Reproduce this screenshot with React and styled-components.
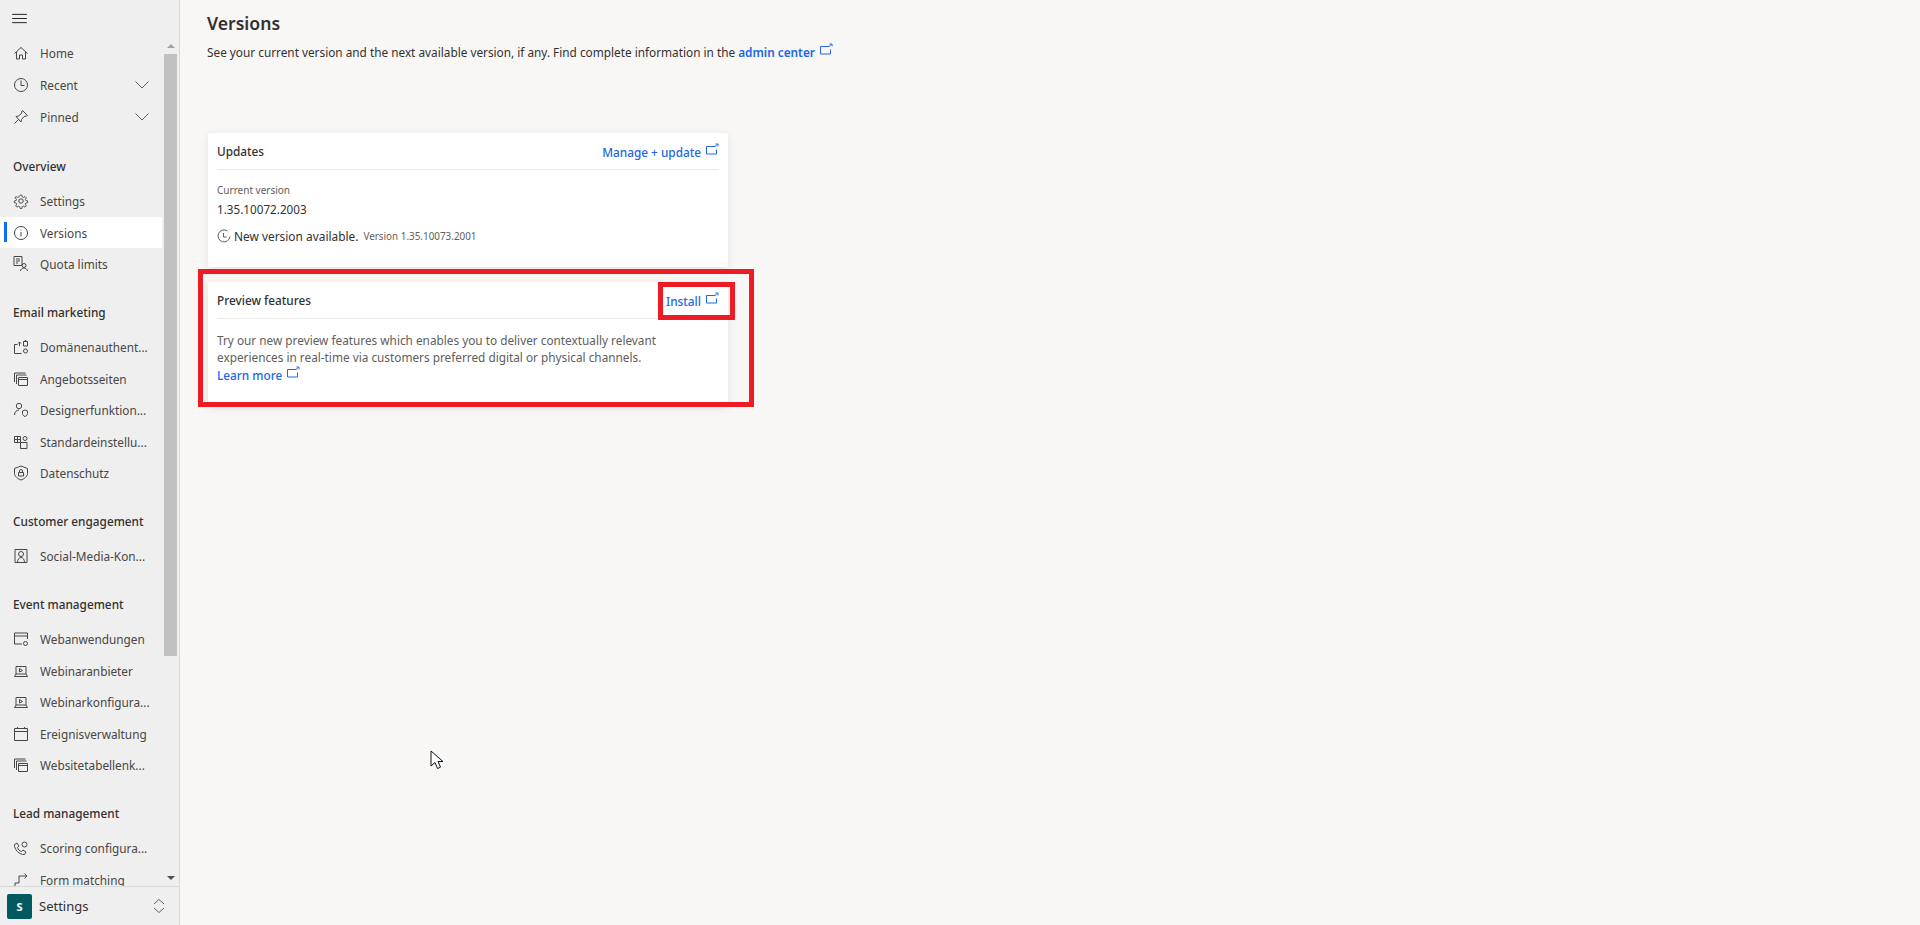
import React from 'react';
import styled, {createGlobalStyle, css} from 'styled-components';

const GlobalStyle = createGlobalStyle`
    html, body {
        margin: 0;
        height: 100%;
        overflow: hidden;
    }
    body {
        font-family: "Noto Sans", "Open Sans", Arial, sans-serif;
        font-size: 11.8px;
        color: #323130;
        background: #f8f7f6;
    }
`

const Page = styled.div`
    display: flex;
    height: 925px;
    position: relative;
`

const Sidebar = styled.aside`
    width: 179px;
    flex: none;
    display: flex;
    flex-direction: column;
    background: #efefef;
    border-right: 1px solid #d9d9d9;
`

const Hamburger = styled.div`
    height: 37px;
    flex: none;
    display: flex;
    align-items: center;
    padding-left: 12px;
    color: #111;
`

const NavArea = styled.div`
    flex: 1;
    min-height: 0;
    display: flex;
    overflow: hidden;
`

const NavList = styled.nav`
    width: 162px;
    flex: none;
    overflow: hidden;
`

const Group = styled.div`
    margin-top: ${props => props.first ? 0 : 13}px;
    padding-bottom: ${props => props.first ? 0.75 : 0}px;
`

const GroupTitle = styled.div`
    height: 38.5px;
    padding-left: 13px;
    display: flex;
    align-items: center;
    font-size: 11.8px;
    font-weight: 500;
    color: #323130;
`

const Row = styled.div`
    height: ${props => props.tall ? 32 : 31.5}px;
    display: flex;
    align-items: center;
    padding-left: 13px;
    position: relative;
    color: #484644;
    ${props => props.active && css`
        background: #fff;
        &::before {
            content: '';
            position: absolute;
            left: 4px;
            top: 5px;
            bottom: 6px;
            width: 3px;
            background: #0f6cff;
        }
    `}
`

const RowIcon = styled.span`
    width: 16px;
    height: 16px;
    flex: none;
    margin-right: 11px;
    color: #484644;
    display: flex;
`

const RowLabel = styled.span`
    flex: 1;
    white-space: nowrap;
    font-size: 11.8px;
`

const Chevron = styled.span`
    width: 16px;
    height: 16px;
    flex: none;
    margin-right: 12px;
    color: #605e5c;
    display: flex;
`

const Scrollbar = styled.div`
    width: 13px;
    margin-left: 2px;
    flex: none;
    display: flex;
    flex-direction: column;
    align-items: center;
`

const ScrollArrow = styled.div`
    height: 17px;
    flex: none;
    display: flex;
    align-items: center;
    justify-content: center;
    &::after {
        content: '';
        border-left: 4px solid transparent;
        border-right: 4px solid transparent;
        ${props => props.down
            ? css`border-top: 4px solid #505050;`
            : css`border-bottom: 4px solid #a3a3a3;`}
    }
`

const ScrollThumb = styled.div`
    width: 13px;
    height: 602px;
    flex: none;
    background: #c1c1c1;
`

const ScrollGap = styled.div`
    flex: 1;
`

const AreaSwitcher = styled.div`
    height: 38px;
    flex: none;
    display: flex;
    align-items: center;
    padding-left: 7px;
    border-top: 1px solid #d9d9d9;
    font-size: 13px;
`

const AreaBadge = styled.div`
    width: 25px;
    height: 25px;
    flex: none;
    margin-right: 7px;
    border-radius: 2px;
    background: #005a5f;
    color: #fff;
    font-size: 11px;
    font-weight: 700;
    display: flex;
    align-items: center;
    justify-content: center;
`

const AreaName = styled.span`
    flex: 1;
`

const AreaChevrons = styled.span`
    width: 14px;
    height: 16px;
    margin-right: 13px;
    color: #605e5c;
    display: flex;
`

const Main = styled.main`
    flex: 1;
    min-width: 0;
    padding: 11px 0 0 27px;
`

const Title = styled.h1`
    margin: 0;
    font-size: 17.6px;
    line-height: 24px;
    font-weight: 600;
    color: #323130;
`

const Intro = styled.p`
    margin: 8px 0 0;
    line-height: 18px;
    font-size: 11.8px;
    color: #323130;
`

const LinkText = styled.a`
    color: #2266e3;
    font-weight: ${props => props.bold ? 600 : 500};
    font-size: 11.8px;
`

const External = styled.svg`
    width: 13px;
    height: 12px;
    margin-left: 5px;
    vertical-align: 2px;
    color: #2266e3;
`

const Cards = styled.div`
    width: 520px;
    margin-top: 72px;
    margin-left: 1px;
    display: flex;
    flex-direction: column;
    gap: 15px;
`

const Card = styled.section`
    position: relative;
    height: ${props => props.height}px;
    box-sizing: border-box;
    padding: 0 9px;
    background: #fff;
    border-radius: 2px;
    box-shadow: 0 2px 8px rgba(0, 0, 0, .09);
`

const CardHeader = styled.header`
    height: 36px;
    display: flex;
    align-items: center;
    justify-content: space-between;
    border-bottom: 1px solid #edebe9;
`

const CardTitle = styled.h2`
    margin: 0;
    font-size: 11.8px;
    font-weight: 500;
    color: #323130;
`

const Caption = styled.div`
    margin-top: 12px;
    font-size: 10px;
    line-height: 16px;
    color: #605e5c;
`

const VersionValue = styled.div`
    margin-top: 2px;
    font-size: 11.7px;
    line-height: 18px;
    color: #323130;
`

const NewVersion = styled.div`
    margin-top: 9px;
    display: flex;
    align-items: center;
    font-size: 11.9px;
    line-height: 18px;
`

const ClockIcon = styled.span`
    width: 14px;
    height: 15px;
    margin-right: 3px;
    color: #605e5c;
    display: flex;
`

const VersionHint = styled.span`
    margin-left: 5px;
    font-size: 9.9px;
    color: #605e5c;
`

const Description = styled.p`
    margin: 13px 0 0;
    width: 470px;
    font-size: 11.8px;
    line-height: 17px;
    color: #605e5c;
`

const Highlight = styled.div`
    position: absolute;
    box-sizing: border-box;
    pointer-events: none;
    border: 5px solid #ed1c24;
    ${props => props.small ? css`
        right: -7px;
        top: 0;
        width: 77px;
        height: 38px;
    ` : css`
        left: -10px;
        top: -13px;
        width: 556px;
        height: 138px;
    `}
`

const Cursor = styled.svg`
    position: absolute;
    left: 430px;
    top: 750px;
    width: 15px;
    height: 21px;
`

const icons = {
    home: <path d="M1.500 8.500 8 2.500l6.500 6M3.500 7v7h3v-4h3v4h3V7" />,
    clock: <><circle cx="8" cy="8" r="6.500" /><path d="M8 3.500v5h3.500" /></>,
    pin: <path d="M9.500 1.500 14.500 6.500l-1 .5-2.500.5-2.500 3-.5 2.500L3 7.500l2.500-.5 3-2.500.5-2.500zM5.500 10.500 1.500 14.500" />,
    gear: <><circle cx="8" cy="8" r="2.200" /><path d="M7 1.500h2l.4 2 1.300.6 1.800-1.100 1.400 1.400-1.100 1.800.6 1.300 2 .4v2l-2 .4-.6 1.300 1.100 1.800-1.400 1.400-1.800-1.100-1.300.6-.4 2H7l-.4-2-1.300-.6-1.800 1.100-1.400-1.400 1.100-1.800-.6-1.300-2-.4v-2l2-.4.6-1.300L1.100 4.400l1.400-1.400 1.800 1.100 1.300-.6z" transform="translate(.8 .8) scale(.9)" /></>,
    info: <><circle cx="8" cy="8" r="6.500" /><path d="M8 7v4.500M8 4.500v1" /></>,
    quota: <><path d="M1 .5h8v9H1zM3 3h4M3 5h4M3 7h2" /><circle cx="11" cy="9.500" r="2" /><path d="M7.500 15c.3-2 1.800-3 3.500-3s3.200 1 3.500 3" /></>,
    domain: <><path d="M1.500 14.500v-9h3M1.500 14.500h7M6.500 3v4M5 4.500 6.500 3 8 4.500" /><path d="M10.500 2.500h4v4.500h-4zM12 2.500V1.500h1v1" /><circle cx="12.500" cy="12" r="2" /></>,
    pages: <path d="M1.500 11V2h11M3.500 13V4h10M5.500 14.500h9v-8h-9zM5.500 8.500h9" />,
    designer: <><circle cx="6" cy="4" r="2.700" /><path d="M1.500 13c0-3 2-5 4.500-5M9.500 9l2.500-1 2.500 1v2.500c0 1.500-1.200 2.500-2.500 3-1.300-.5-2.500-1.500-2.500-3z" /></>,
    defaults: <><path d="M1.500 2.500h6v6h-6zM7.500 8.500h6.500v6H7.500zM1.500 5.500h6M4.500 2.500v6" /><circle cx="12" cy="4.500" r="2" /></>,
    shield: <><path d="M8 1 14.500 3.500v5c0 3-3.500 5.500-6.500 6.500-3-1-6.500-3.500-6.500-6.500v-5z" /><path d="M5.500 7.500h5v3.500h-5zM6.500 7.500V6a1.500 1.500 0 0 1 3 0v1.500" /></>,
    social: <><path d="M2 1.500h12v13H2z" /><circle cx="8" cy="6" r="2.500" /><path d="M4.500 14.500c0-3 1.500-5 3.500-5s3.500 2 3.500 5" /></>,
    web: <><path d="M14.500 8V2H1.500v11H9M1.500 5h13" /><circle cx="12.500" cy="12.500" r="2" /></>,
    laptop: <path d="M3 11V3.500h10V11M1.500 13.500h13L13 11H3zM6.500 5.500 9.500 7.500l-3 1.500z" />,
    calendar: <path d="M1.500 2.500h13v12h-13zM1.500 5.500h13M4.500 1v2M11.500 1v2" />,
    scoring: <><path d="M1.500 4.500 4 3l2 3-1.500 1.500c.5 2 2 3.500 4 4L10 10l3 2-1.500 2.500C6.500 15 1 9.500 1.500 4.500z" /><circle cx="11.500" cy="4.500" r="2.500" /></>,
    form: <path d="M2 14.500V11h4V4h8M11.500 1.500 14 4l-2.500 2.500" />,
};

const Icon = ({name}) => (
    <svg viewBox="0 0 16 16" width="16" height="16" fill="none" stroke="currentColor" strokeWidth="1">
        {icons[name]}
    </svg>
);

const ChevronDown = () => (
    <svg viewBox="0 0 16 16" width="16" height="16" fill="none" stroke="currentColor" strokeWidth="1">
        <path d="M1.500 4.500 8 11l6.500-6.500" />
    </svg>
);

const ExternalIcon = () => (
    <External viewBox="0 0 13 12" fill="none" stroke="currentColor" strokeWidth="1">
        <path d="M9.500 3.500H.5v7.500h10V6.500M9 3.500l2-2M9.500 1h2.500v2.500" />
    </External>
);

const groups = [
    {items: [
        {icon: 'home', label: 'Home'},
        {icon: 'clock', label: 'Recent', chevron: true},
        {icon: 'pin', label: 'Pinned', chevron: true},
    ]},
    {title: 'Overview', items: [
        {icon: 'gear', label: 'Settings'},
        {icon: 'info', label: 'Versions', active: true},
        {icon: 'quota', label: 'Quota limits'},
    ]},
    {title: 'Email marketing', items: [
        {icon: 'domain', label: 'Domänenauthent...'},
        {icon: 'pages', label: 'Angebotsseiten'},
        {icon: 'designer', label: 'Designerfunktion...'},
        {icon: 'defaults', label: 'Standardeinstellu...'},
        {icon: 'shield', label: 'Datenschutz'},
    ]},
    {title: 'Customer engagement', items: [
        {icon: 'social', label: 'Social-Media-Kon...'},
    ]},
    {title: 'Event management', items: [
        {icon: 'web', label: 'Webanwendungen'},
        {icon: 'laptop', label: 'Webinaranbieter'},
        {icon: 'laptop', label: 'Webinarkonfigura...'},
        {icon: 'calendar', label: 'Ereignisverwaltung'},
        {icon: 'pages', label: 'Websitetabellenk...'},
    ]},
    {title: 'Lead management', items: [
        {icon: 'scoring', label: 'Scoring configura...'},
        {icon: 'form', label: 'Form matching'},
    ]},
];

function SideNav(){
    return (
        <Sidebar>
            <Hamburger>
                <svg viewBox="0 0 16 12" width="15" height="11" fill="none" stroke="currentColor" strokeWidth="1">
                    <path d="M0 1.500h16M0 6h16M0 10.500h16" />
                </svg>
            </Hamburger>
            <NavArea>
                <NavList>
                    {groups.map((group, index) => (
                        <Group key={index} first={index === 0}>
                            {group.title && <GroupTitle>{group.title}</GroupTitle>}
                            {group.items.map(item => (
                                <Row key={item.label} active={item.active} tall={index === 0}>
                                    <RowIcon><Icon name={item.icon} /></RowIcon>
                                    <RowLabel>{item.label}</RowLabel>
                                    {item.chevron && <Chevron><ChevronDown /></Chevron>}
                                </Row>
                            ))}
                        </Group>
                    ))}
                </NavList>
                <Scrollbar>
                    <ScrollArrow />
                    <ScrollThumb />
                    <ScrollGap />
                    <ScrollArrow down />
                </Scrollbar>
            </NavArea>
            <AreaSwitcher>
                <AreaBadge>S</AreaBadge>
                <AreaName>Settings</AreaName>
                <AreaChevrons>
                    <svg viewBox="0 0 14 16" width="14" height="16" fill="none" stroke="currentColor" strokeWidth="1">
                        <path d="M2 6 7 1.500 12 6M2 10l5 4.500 5-4.500" />
                    </svg>
                </AreaChevrons>
            </AreaSwitcher>
        </Sidebar>
    );
}

export default function App(){
    return (
        <Page>
            <GlobalStyle />
            <SideNav />
            <Main>
                <Title>Versions</Title>
                <Intro>
                    See your current version and the next available version, if any. Find complete information in the{' '}
                    <LinkText bold>admin center</LinkText><ExternalIcon />
                </Intro>
                <Cards>
                    <Card height={134}>
                        <CardHeader>
                            <CardTitle>Updates</CardTitle>
                            <LinkText>Manage + update<ExternalIcon /></LinkText>
                        </CardHeader>
                        <Caption>Current version</Caption>
                        <VersionValue>1.35.10072.2003</VersionValue>
                        <NewVersion>
                            <ClockIcon>
                                <svg viewBox="0 0 14 15" width="14" height="15" fill="none" stroke="currentColor" strokeWidth="1">
                                    <path d="M10.500 2A6 6 0 1 0 13 7.500M6.500 4v4H9.500" />
                                </svg>
                            </ClockIcon>
                            New version available.
                            <VersionHint>Version 1.35.10073.2001</VersionHint>
                        </NewVersion>
                    </Card>
                    <Card height={124}>
                        <CardHeader>
                            <CardTitle>Preview features</CardTitle>
                            <LinkText>Install<ExternalIcon /></LinkText>
                        </CardHeader>
                        <Description>
                            Try our new preview features which enables you to deliver contextually relevant experiences in real-time via customers preferred digital or physical channels.
                            <br />
                            <LinkText>Learn more<ExternalIcon /></LinkText>
                        </Description>
                        <Highlight />
                        <Highlight small />
                    </Card>
                </Cards>
            </Main>
            <Cursor viewBox="0 0 15 21">
                <path d="M1 1v15l4-3.500 2.500 6 3-1.300-2.500-5.700h5z" fill="#fff" stroke="#111" strokeWidth="1" />
            </Cursor>
        </Page>
    );
}
